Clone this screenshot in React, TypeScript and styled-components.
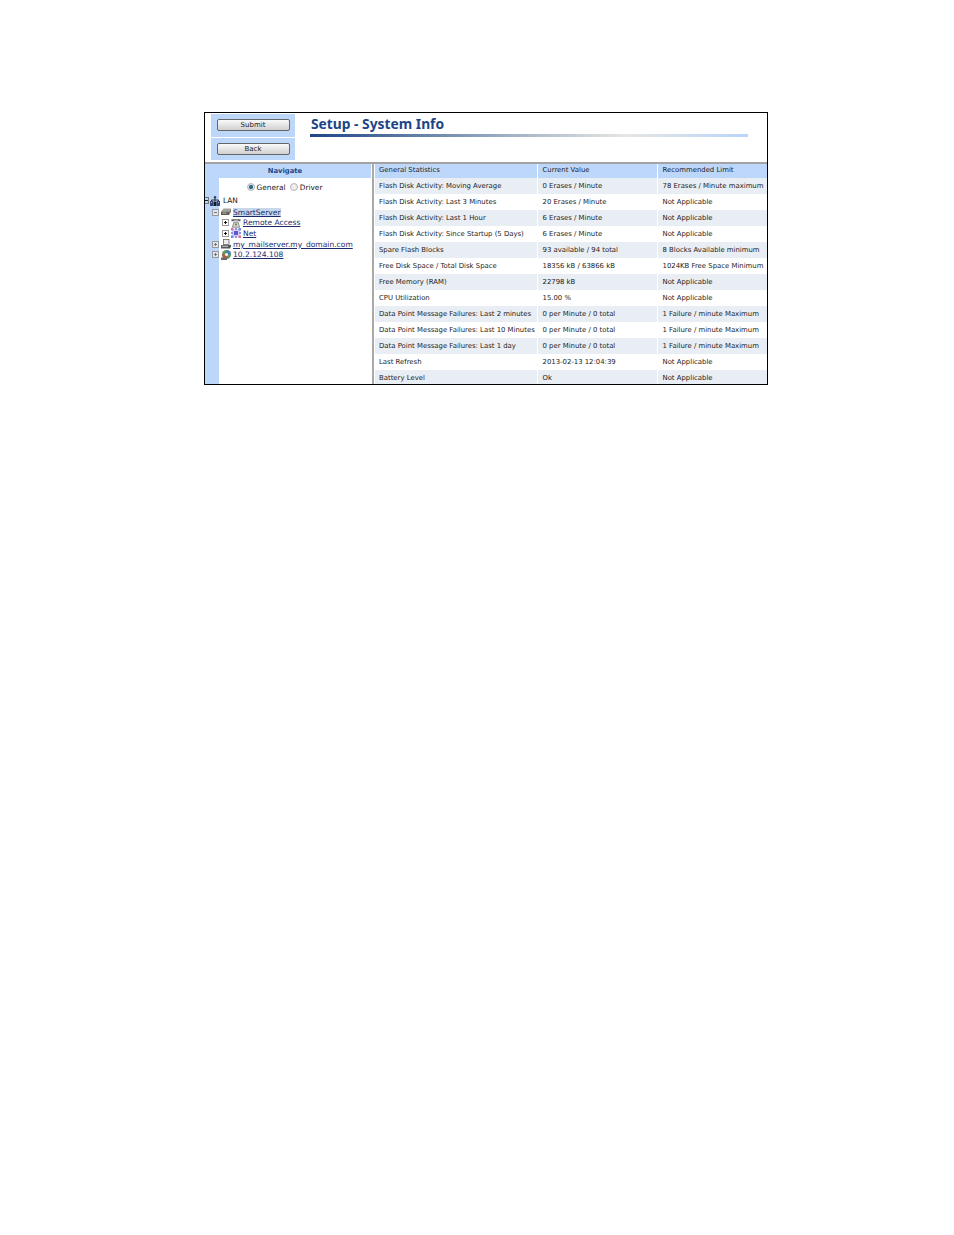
import React from 'react'
import styled, { createGlobalStyle } from 'styled-components'

const GlobalStyle = createGlobalStyle`
  html, body {
    margin: 0;
    padding: 0;
    background: #fff;
    font-family: "DejaVu Sans", Verdana, sans-serif;
  }
`

const Page = styled.div`
  width: 954px;
  height: 1235px;
  padding: 112px 0 0 204px;
  box-sizing: border-box;
`

const Frame = styled.div`
  width: 564px;
  height: 273px;
  box-sizing: border-box;
  border: 1px solid #000;
  display: flex;
  flex-direction: column;
  overflow: hidden;
`

const Header = styled.header`
  height: 49px;
  display: flex;
  border-bottom: 2px solid #a3a3a3;
  flex: none;
`

const ButtonColumn = styled.div`
  width: 84px;
  margin-left: 6px;
  padding: 1px 0 2px;
  display: flex;
  flex-direction: column;
  gap: 1px;
`

const ButtonCell = styled.div`
  flex: 1;
  background: #bdd7fb;
  display: flex;
  align-items: center;
  justify-content: center;
`

const Button = styled.button`
  width: 73px;
  height: 12px;
  padding: 1px 0 0;
  border: 1px solid #666;
  border-radius: 2px;
  background: linear-gradient(#fafafa, #d0d0d0);
  color: #222;
  font: 7px "DejaVu Sans", Verdana, sans-serif;
  line-height: 9px;
`

const TitleBlock = styled.div`
  margin-left: 15px;
  padding-top: 2px;
  width: 438px;
`

const Title = styled.h1`
  margin: 0;
  height: 19px;
  padding-left: 1px;
  color: #1c4587;
  font: bold 13.8px/17px "Noto Sans", "DejaVu Sans", sans-serif;
`

const TitleRule = styled.div`
  height: 3px;
  background: linear-gradient(90deg, #1c4587 0%, #9eb0c4 45%, #e6e6e2 72%, #b9d5fa 100%);
`

const Body = styled.div`
  flex: 1;
  display: flex;
  min-height: 0;
`

const Nav = styled.nav`
  width: 166px;
  flex: none;
  padding-right: 1px;
  border-right: 2px solid #a9a9a9;
  display: flex;
  flex-direction: column;
`

const NavHeading = styled.div`
  height: 14px;
  flex: none;
  padding-right: 6px;
  background: #bdd7fb;
  color: #1c4587;
  font-size: 6.8px;
  font-weight: bold;
  line-height: 14px;
  text-align: center;
`

const NavBody = styled.div`
  flex: 1;
  border-left: 14px solid #bdd7fb;
  padding-top: 3px;
`

const RadioRow = styled.div`
  display: flex;
  justify-content: center;
  align-items: center;
  height: 12px;
  padding-right: 25px;
  font-size: 7.4px;
  color: #222;
`

const Radio = styled.span<{ $on?: boolean }>`
  width: 8px;
  height: 8px;
  box-sizing: border-box;
  border-radius: 50%;
  border: 1px solid #b4b4b4;
  background: ${(p) => (p.$on ? 'radial-gradient(circle, #2e6b8f 0 45%, #dce8ee 55%)' : '#eee')};
  margin: 0 2px 0 4px;
`

const Tree = styled.div`
  margin: 1px 0 0 -8px;
`

const TreeRow = styled.div<{ $level: number }>`
  display: flex;
  align-items: center;
  height: 10.6px;
  padding-left: ${(p) => (p.$level - 1) * 10 + 1}px;
  gap: 1px;
  font-size: 7.55px;
  white-space: nowrap;
`

const RootRow = styled.div`
  display: flex;
  align-items: center;
  height: 13px;
  margin-left: -6px;
  font-size: 7.4px;
  color: #222;
  white-space: nowrap;
`

/* the root expander is cut off by the frame, only its right part shows */
const RootExpander = styled.span`
  width: 4px;
  height: 7px;
  box-sizing: border-box;
  border: 1px solid #777;
  border-left: 0;
  margin-right: 1px;
  position: relative;
  &::before {
    content: '';
    position: absolute;
    left: 0;
    top: 2px;
    width: 3px;
    height: 1px;
    background: #222;
  }
`

const RootLabel = styled.span`
  margin-left: 3px;
`

const Expander = styled.span<{ $onStrip?: boolean }>`
  width: 7px;
  height: 7px;
  box-sizing: border-box;
  border: 1px solid #9a9a9a;
  background: ${(p) => (p.$onStrip ? '#dbe6f5' : '#fff')};
  flex: none;
  position: relative;
  margin-right: 1px;
  &::before {
    content: '';
    position: absolute;
    left: 1px;
    top: 2px;
    width: 3px;
    height: 1px;
    background: ${(p) => (p.$onStrip ? '#777' : '#111')};
  }
`

const ExpanderPlus = styled(Expander)`
  &::after {
    content: '';
    position: absolute;
    left: 2px;
    top: 1px;
    width: 1px;
    height: 3px;
    background: ${(p) => (p.$onStrip ? '#777' : '#111')};
  }
`

const NodeLink = styled.a<{ $selected?: boolean }>`
  color: #1a2a6a;
  text-decoration: underline;
  margin-left: 1px;
  background: ${(p) => (p.$selected ? '#c8d8ec' : 'transparent')};
  line-height: 9px;
`

const IconSvg = styled.svg`
  width: 10px;
  height: 10px;
  flex: none;
`

const TableWrap = styled.div`
  flex: 1;
  margin-left: 1px;
  min-width: 0;
`

const Table = styled.table`
  width: 392px;
  table-layout: fixed;
  border-collapse: collapse;
  font-size: 6.9px;
  color: #1c1c1c;
`

const Th = styled.th<{ $w: number }>`
  width: ${(p) => p.$w}px;
  height: 14px;
  padding: 0 0 2px 5px;
  box-sizing: border-box;
  background: #bdd7fb;
  font-weight: normal;
  text-align: left;
  border-right: 1px solid #fff;
  &:first-child {
    padding-left: 4px;
  }
  &:last-child {
    border-right: 0;
  }
`

const Tr = styled.tr<{ $shade: boolean }>`
  background: ${(p) => (p.$shade ? '#e9edf4' : '#fff')};
`

const Td = styled.td`
  height: 16px;
  padding: 0 0 0 5px;
  box-sizing: border-box;
  white-space: nowrap;
  border-right: 1px solid #fff;
  &:first-child {
    padding-left: 4px;
  }
  &:last-child {
    border-right: 0;
  }
`

const rows = [
  ['Flash Disk Activity: Moving Average', '0 Erases / Minute', '78 Erases / Minute maximum'],
  ['Flash Disk Activity: Last 3 Minutes', '20 Erases / Minute', 'Not Applicable'],
  ['Flash Disk Activity: Last 1 Hour', '6 Erases / Minute', 'Not Applicable'],
  ['Flash Disk Activity: Since Startup (5 Days)', '6 Erases / Minute', 'Not Applicable'],
  ['Spare Flash Blocks', '93 available / 94 total', '8 Blocks Available minimum'],
  ['Free Disk Space / Total Disk Space', '18356 kB / 63866 kB', '1024KB Free Space Minimum'],
  ['Free Memory (RAM)', '22798 kB', 'Not Applicable'],
  ['CPU Utilization', '15.00 %', 'Not Applicable'],
  ['Data Point Message Failures: Last 2 minutes', '0 per Minute / 0 total', '1 Failure / minute Maximum'],
  ['Data Point Message Failures: Last 10 Minutes', '0 per Minute / 0 total', '1 Failure / minute Maximum'],
  ['Data Point Message Failures: Last 1 day', '0 per Minute / 0 total', '1 Failure / minute Maximum'],
  ['Last Refresh', '2013-02-13 12:04:39', 'Not Applicable'],
  ['Battery Level', 'Ok', 'Not Applicable'],
]

const LanIcon = () => (
  <IconSvg viewBox="0 0 10 10">
    <circle cx="5" cy="1.2" r="1.2" fill="#33405a" />
    <path d="M5 2v2M1.5 5V4h7v1M5 4v2" stroke="#2a3040" strokeWidth="1" fill="none" />
    <rect x="0" y="5" width="3.4" height="5" fill="#2f4a78" />
    <rect x="6.6" y="5" width="3.4" height="5" fill="#2f4a78" />
    <rect x="3.6" y="6" width="2.8" height="4" fill="#15192a" />
    <rect x="1" y="6" width="1" height="1" fill="#9fb2d0" />
    <rect x="8" y="6" width="1" height="1" fill="#9fb2d0" />
  </IconSvg>
)

const ServerIcon = () => (
  <IconSvg viewBox="0 0 10 10">
    <path d="M0 4.5L2.5 1.5H10L8 4.5z" fill="#a2a298" />
    <path d="M0 4.5H8V8H0z" fill="#5f6058" />
    <path d="M8 4.5L10 1.5V5L8 8z" fill="#7d7e74" />
    <rect x="1.5" y="5.5" width="4" height="1" fill="#b4b4a8" />
  </IconSvg>
)

const PhoneIcon = () => (
  <IconSvg viewBox="0 0 10 10">
    <path d="M0.5 3.2V1.2h9v2H7.2V2.4H2.8v0.8z" fill="#5f5f5f" />
    <path d="M3 4h4l1.6 5.2H1.4z" fill="#d8d8d2" stroke="#666" strokeWidth="0.7" />
    <circle cx="5" cy="6.4" r="1.1" fill="#7a7a7a" />
  </IconSvg>
)

const NetIcon = () => (
  <IconSvg viewBox="0 0 10 10">
    <rect x="1" y="1" width="8" height="8" fill="#d8d6f6" />
    <rect x="3" y="3" width="4" height="4" fill="#5f55d0" />
    <rect x="0" y="0" width="2.5" height="2.5" fill="#e06aa6" />
    <rect x="7.5" y="0" width="2.5" height="2.5" fill="#6f8ae6" />
    <rect x="0" y="7.5" width="2.5" height="2.5" fill="#6f8ae6" />
    <rect x="7.5" y="7.5" width="2.5" height="2.5" fill="#e0708a" />
    <rect x="4" y="0" width="2" height="2" fill="#8f90e8" />
    <rect x="4" y="8" width="2" height="2" fill="#8f90e8" />
    <rect x="0" y="4" width="2" height="2" fill="#8f90e8" />
    <rect x="8" y="4" width="2" height="2" fill="#8f90e8" />
  </IconSvg>
)

const MailIcon = () => (
  <IconSvg viewBox="0 0 10 10">
    <rect x="2.5" y="0.5" width="5.5" height="5" fill="#ececec" stroke="#666" strokeWidth="0.8" />
    <path d="M0 6h10v1.5L9 9.5H0z" fill="#55575a" />
    <rect x="1" y="6.8" width="6" height="0.9" fill="#d5d5d5" />
  </IconSvg>
)

const HostIcon = () => (
  <IconSvg viewBox="0 0 10 10">
    <circle cx="5.5" cy="4.5" r="4.5" fill="#5c9a58" />
    <path d="M5.5 0a4.5 4.5 0 0 1 4.5 4.5H5.5z" fill="#4d7fc4" />
    <path d="M1 4.5a4.5 4.5 0 0 0 4.5 4.5V4.5z" fill="#c8503f" />
    <circle cx="5.5" cy="4.5" r="1.6" fill="#f4f4f4" />
    <rect x="0" y="7.5" width="6" height="2.5" fill="#666a70" />
  </IconSvg>
)

export default function App() {
  return (
    <Page>
      <GlobalStyle />
      <Frame>
        <Header>
          <ButtonColumn>
            <ButtonCell>
              <Button>Submit</Button>
            </ButtonCell>
            <ButtonCell>
              <Button>Back</Button>
            </ButtonCell>
          </ButtonColumn>
          <TitleBlock>
            <Title>Setup - System Info</Title>
            <TitleRule />
          </TitleBlock>
        </Header>
        <Body>
          <Nav>
            <NavHeading>Navigate</NavHeading>
            <NavBody>
              <RadioRow>
                <Radio $on />
                General
                <Radio />
                Driver
              </RadioRow>
              <Tree>
                <RootRow>
                  <RootExpander />
                  <LanIcon />
                  <RootLabel>LAN</RootLabel>
                </RootRow>
                <TreeRow $level={1}>
                  <Expander $onStrip />
                  <ServerIcon />
                  <NodeLink $selected>SmartServer</NodeLink>
                </TreeRow>
                <TreeRow $level={2}>
                  <ExpanderPlus />
                  <PhoneIcon />
                  <NodeLink>Remote Access</NodeLink>
                </TreeRow>
                <TreeRow $level={2}>
                  <ExpanderPlus />
                  <NetIcon />
                  <NodeLink>Net</NodeLink>
                </TreeRow>
                <TreeRow $level={1}>
                  <ExpanderPlus $onStrip />
                  <MailIcon />
                  <NodeLink>my_mailserver.my_domain.com</NodeLink>
                </TreeRow>
                <TreeRow $level={1}>
                  <ExpanderPlus $onStrip />
                  <HostIcon />
                  <NodeLink>10.2.124.108</NodeLink>
                </TreeRow>
              </Tree>
            </NavBody>
          </Nav>
          <TableWrap>
            <Table>
              <thead>
                <tr>
                  <Th $w={162}>General Statistics</Th>
                  <Th $w={120}>Current Value</Th>
                  <Th $w={110}>Recommended Limit</Th>
                </tr>
              </thead>
              <tbody>
                {rows.map((r, i) => (
                  <Tr key={r[0]} $shade={i % 2 === 0}>
                    <Td>{r[0]}</Td>
                    <Td>{r[1]}</Td>
                    <Td>{r[2]}</Td>
                  </Tr>
                ))}
              </tbody>
            </Table>
          </TableWrap>
        </Body>
      </Frame>
    </Page>
  )
}
